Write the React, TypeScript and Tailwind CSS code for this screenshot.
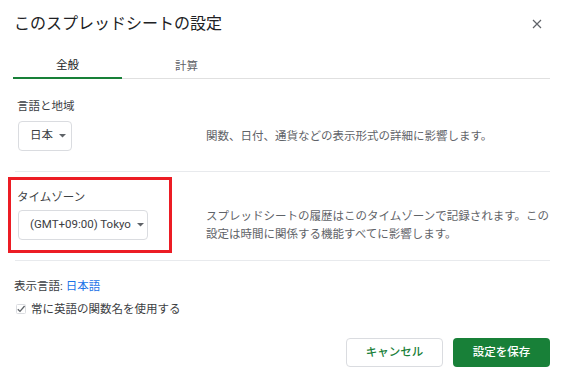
import React from 'react';

function Caret() {
  return (
    <svg width="7" height="4" viewBox="0 0 7 4" className="shrink-0">
      <path d="M0 0 L7 0 L3.5 3.5 Z" fill="#5f6368" />
    </svg>
  );
}

function Select({ label, width }: { label: string; width: string }) {
  return (
    <div
      className={`${width} h-[30px] flex items-center justify-between gap-[6px] pl-[11px] pr-[8px] border border-[#dadce0] rounded-[4px] bg-white text-[11.5px] text-[#3c4043] whitespace-nowrap`}
    >
      <span>{label}</span>
      <Caret />
    </div>
  );
}

export default function App() {
  return (
    <div className="relative w-[563px] h-[383px] bg-white overflow-hidden [font-family:Roboto,'Noto_Sans_CJK_JP',sans-serif]">
      {/* header */}
      <div className="flex items-center justify-between pt-[12px] pl-[14px] pr-[20px]">
        <h1 className="text-[16px] leading-[24px] text-[#202124]">このスプレッドシートの設定</h1>
        <svg width="10" height="10" viewBox="0 0 10 10" className="mr-[1px]">
          <path d="M1 1 L9 9 M9 1 L1 9" stroke="#5f6368" strokeWidth="1.2" />
        </svg>
      </div>

      {/* tabs */}
      <div className="mt-[19px] mx-[13px] flex border-b border-[#e0e0e0]">
        <div className="w-[109px] h-[24px] -mb-[1px] flex items-center justify-center border-b-2 border-[#188038] text-[11.5px] text-[#202124]">
          全般
        </div>
        <div className="w-[129px] h-[24px] -mb-[1px] flex items-center justify-center text-[11.5px] text-[#5f6368]">
          計算
        </div>
      </div>

      {/* locale */}
      <div className="ml-[15px] mr-[13px] pt-[19px] pb-[20px] border-b border-[#e8eaed]">
        <div className="pl-[2px] text-[11.5px] leading-[16px] text-[#3c4043]">言語と地域</div>
        <div className="mt-[7px] pl-[3px] h-[30px] flex items-center">
          <div className="w-[188px] shrink-0">
            <Select label="日本" width="w-[54px]" />
          </div>
          <p className="text-[11.5px] leading-[18px] text-[#5f6368]">
            関数、日付、通貨などの表示形式の詳細に影響します。
          </p>
        </div>
      </div>

      {/* time zone */}
      <div className="ml-[15px] mr-[13px] pt-[17px] pb-[20px] border-b border-[#e8eaed]">
        <div className="pl-[2px] text-[11.5px] leading-[16px] text-[#3c4043]">タイムゾーン</div>
        <div className="mt-[5px] pl-[3px] h-[30px] flex items-center">
          <div className="w-[188px] shrink-0">
            <Select label="(GMT+09:00) Tokyo" width="w-[130px]" />
          </div>
          <p className="text-[11.5px] leading-[18px] text-[#5f6368]">
            スプレッドシートの履歴はこのタイムゾーンで記録されます。この設定は時間に関係する機能すべてに影響します。
          </p>
        </div>
      </div>

      {/* display language */}
      <div className="ml-[14px] mr-[13px] pt-[17px]">
        <div className="text-[11.5px] leading-[16px] text-[#3c4043]">
          表示言語: <span className="text-[#1a73e8]">日本語</span>
        </div>
        <div className="mt-[7px] pl-[2px] flex items-center gap-[5px] text-[11.5px] leading-[16px] text-[#3c4043]">
          <svg width="10" height="10" viewBox="0 0 10 10">
            <rect x="0.5" y="0.5" width="9" height="9" rx="1" fill="white" stroke="#dadce0" />
            <path d="M1.8 5.2 L4 7.4 L8.6 2" fill="none" stroke="#5f6368" strokeWidth="1.3" />
          </svg>
          <span>常に英語の関数名を使用する</span>
        </div>
        <div className="mt-[21px] flex justify-end gap-[10px]">
          <button className="w-[97px] h-[29px] rounded-[4px] border border-[#dadce0] bg-white text-[11.5px] font-medium text-[#188038]">
            キャンセル
          </button>
          <button className="w-[97px] h-[29px] rounded-[4px] bg-[#188038] text-[11.5px] font-medium text-white">
            設定を保存
          </button>
        </div>
      </div>

      {/* annotation */}
      <div className="absolute left-[8px] top-[177px] w-[164px] h-[76px] border-[3px] border-[#ec1c24]" />
    </div>
  );
}
